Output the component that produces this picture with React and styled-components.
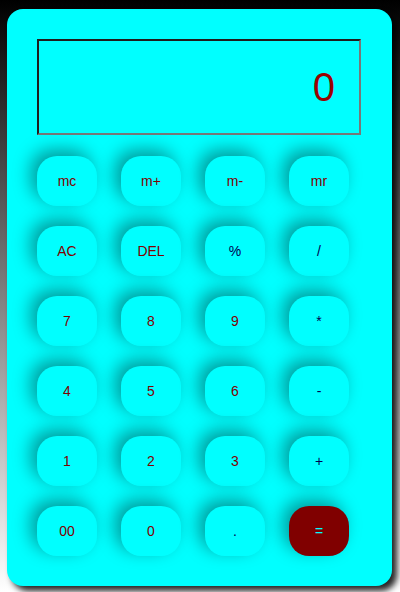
import React from "react";
import styled, { createGlobalStyle } from "styled-components";

const Global = createGlobalStyle`
  html, body {
    margin: 0;
    padding: 0;
    min-height: 100vh;
  }
  body {
    background: linear-gradient(to bottom, #000 0%, #fff 100%);
    font-family: "Liberation Sans", Arial, sans-serif;
  }
`;

const Page = styled.div`
  padding: 9px 0 0 7px;
`;

const Calculator = styled.div`
  width: 385px;
  box-sizing: border-box;
  padding: 30px;
  background: #00ffff;
  border-radius: 16px;
  box-shadow: 5px 5px 6px rgba(0, 0, 0, 0.85);
  display: flex;
  flex-direction: column;
  gap: 21px;
`;

const Display = styled.div`
  width: 324px;
  height: 96px;
  box-sizing: border-box;
  border-style: solid;
  border-width: 2px;
  border-color: #1e1e1e #777 #777 #1e1e1e;
  display: flex;
  align-items: center;
  justify-content: flex-end;
  padding: 0 24px;
  font-size: 40px;
  color: #9a0000;
`;

const Keys = styled.div`
  display: grid;
  grid-template-columns: 60px 60px 60px 60px;
  grid-auto-rows: 50px;
  column-gap: 24px;
  row-gap: 20px;
`;

const Key = styled.button`
  border: none;
  outline: none;
  margin: 0;
  padding: 0;
  border-radius: 20px;
  font-family: "Liberation Sans", Arial, sans-serif;
  font-size: 14px;
  background: ${(p) => (p.$equals ? "#800000" : "#00ffff")};
  color: ${(p) => (p.$equals ? "#00ffff" : p.$op ? "#000050" : "#800000")};
  box-shadow: -6px -6px 18px rgba(0, 0, 0, 0.4);
  display: flex;
  align-items: center;
  justify-content: center;
`;

const keys = [
  ["mc"], ["m+"], ["m-"], ["mr"],
  ["AC"], ["DEL"], ["%", "op"], ["/", "op"],
  ["7"], ["8"], ["9"], ["*", "op"],
  ["4"], ["5"], ["6"], ["-", "op"],
  ["1"], ["2"], ["3"], ["+", "op"],
  ["00"], ["0"], [".", "op"], ["=", "eq"],
];

export default function App() {
  return (
    <>
      <Global />
      <Page>
        <Calculator>
          <Display>0</Display>
          <Keys>
            {keys.map(([label, kind]) => (
              <Key key={label} $op={kind === "op"} $equals={kind === "eq"}>
                {label}
              </Key>
            ))}
          </Keys>
        </Calculator>
      </Page>
    </>
  );
}
